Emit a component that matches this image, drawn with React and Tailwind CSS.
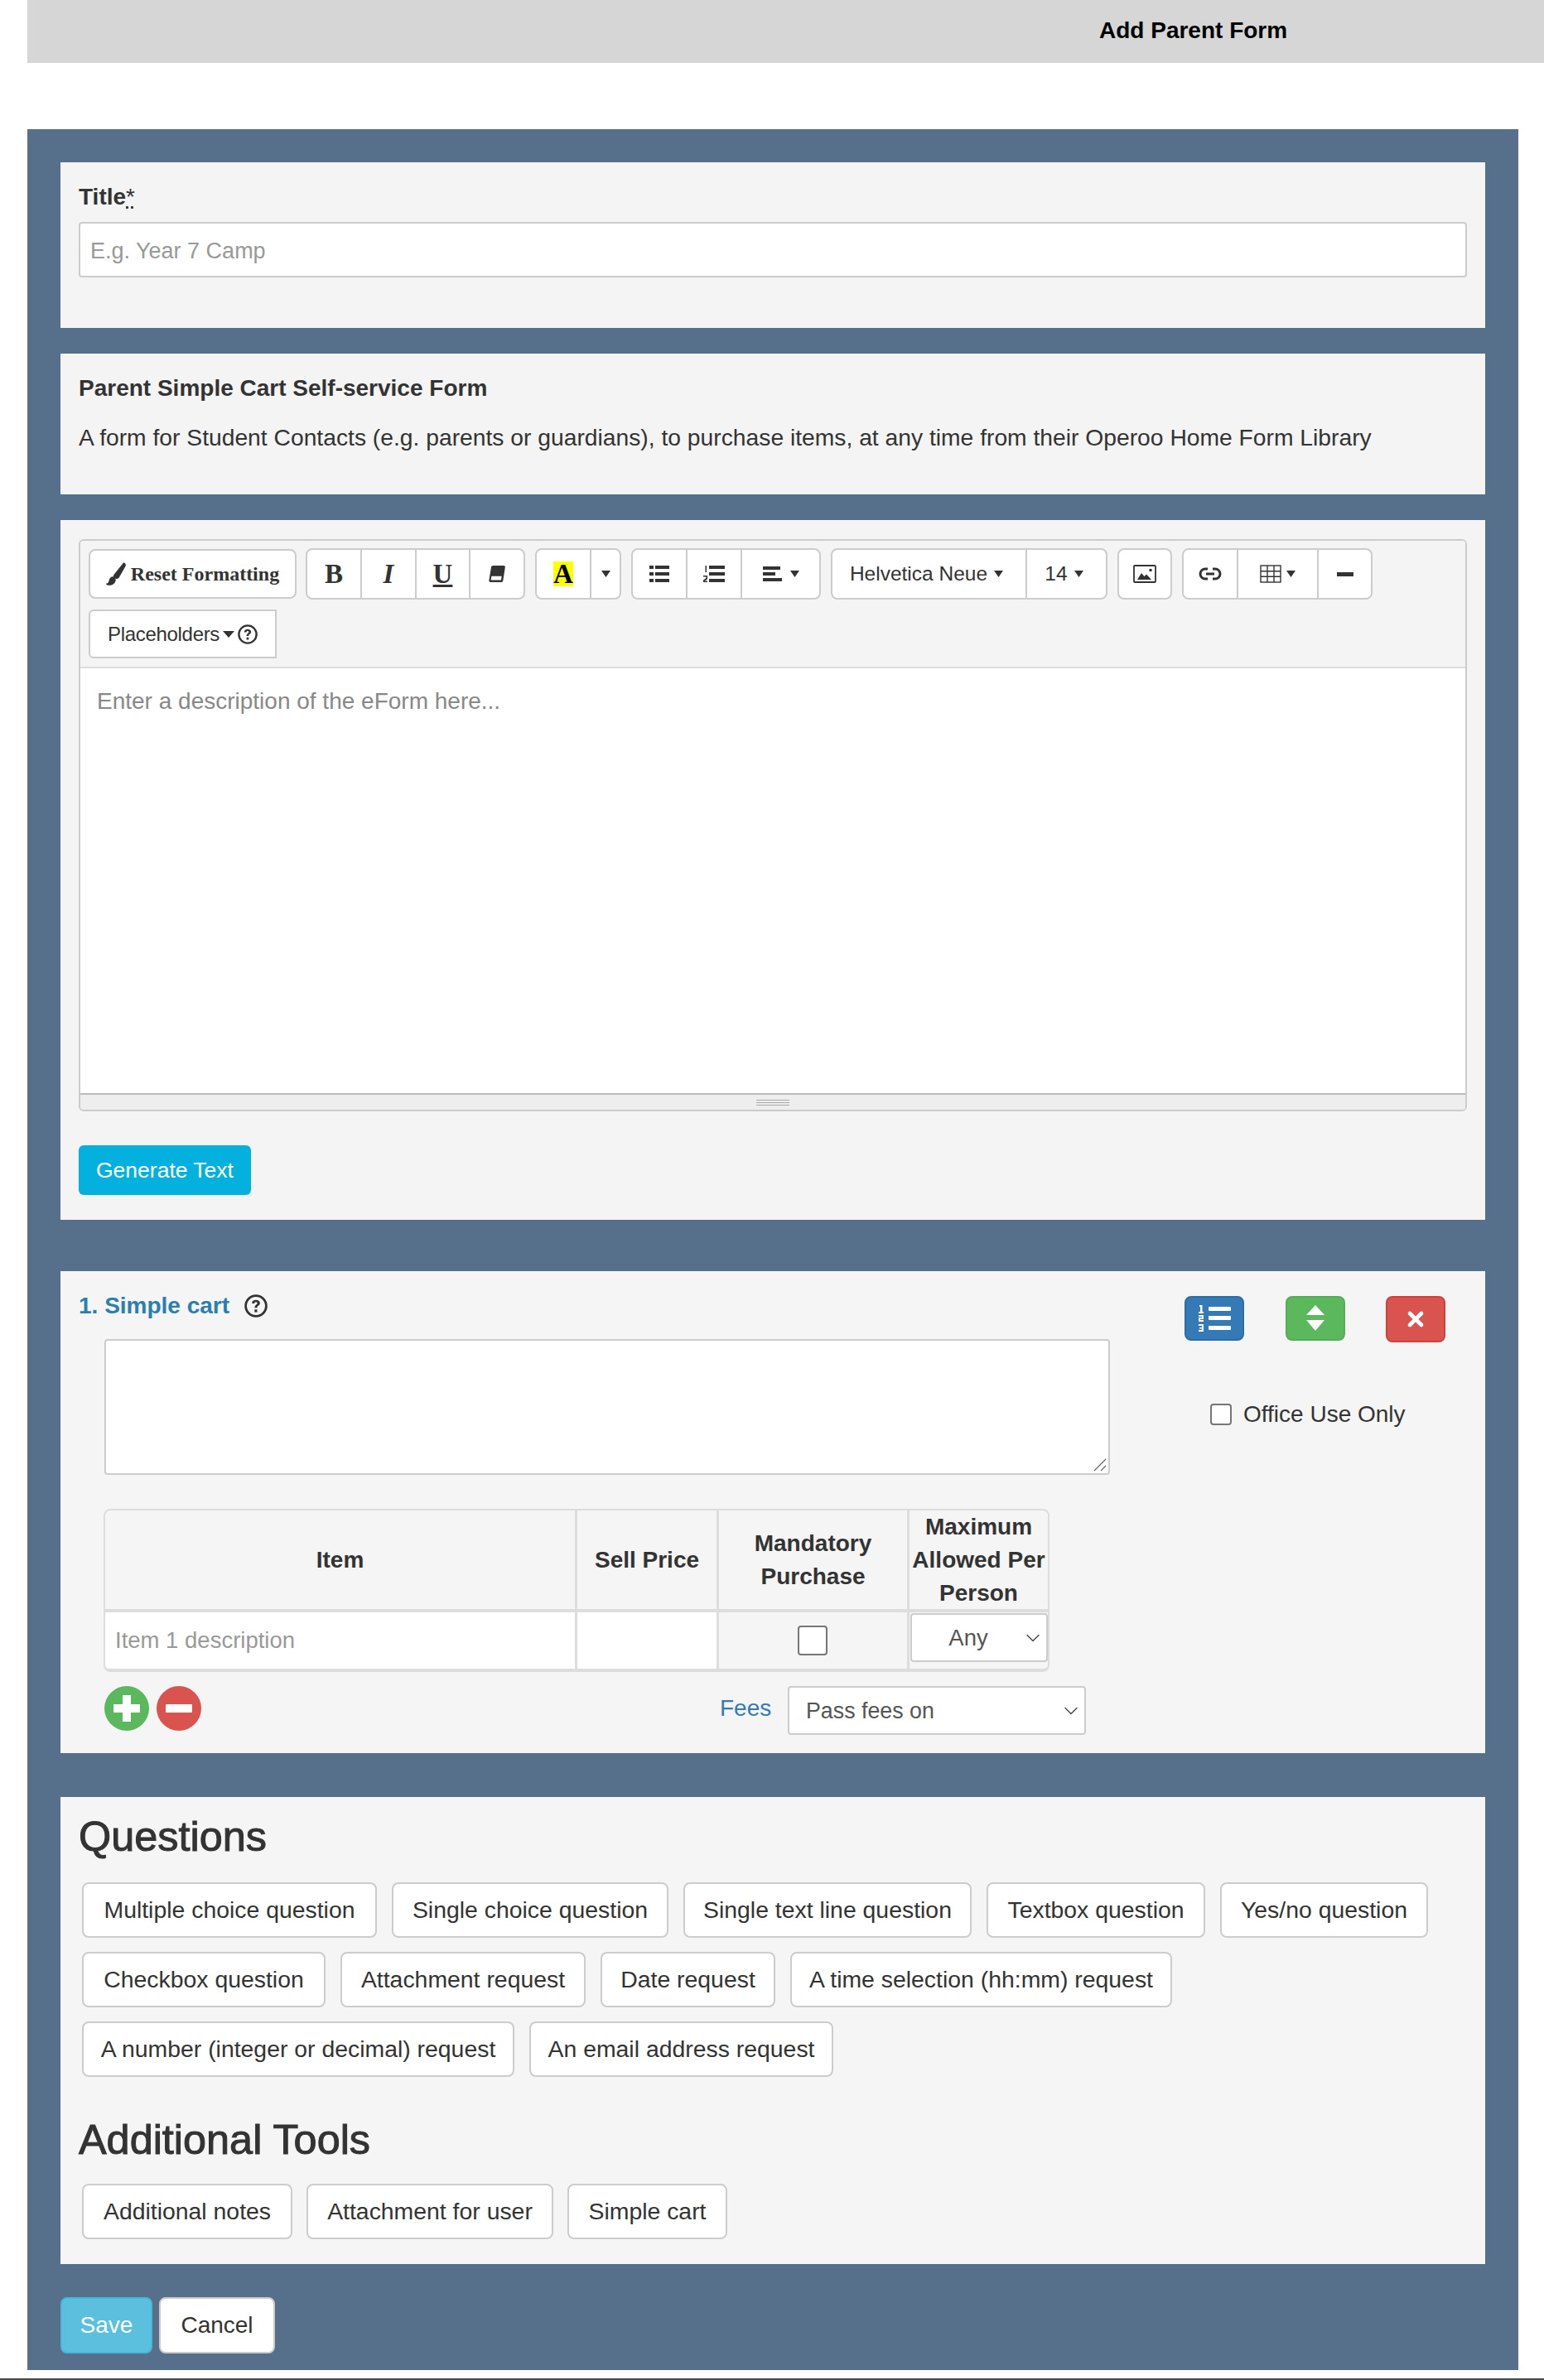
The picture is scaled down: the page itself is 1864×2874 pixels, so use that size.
import React from "react";
import { ChevronDown, X } from "lucide-react";

const Caret = ({ className = "w-[11px] h-[8px]" }) => (
  <svg viewBox="0 0 10 8" preserveAspectRatio="none" className={`fill-[#333] ${className}`}>
    <path d="M0 0h10L5 8z" />
  </svg>
);

const Help = ({ className = "" }) => (
  <svg viewBox="0 0 26 26" className={className}>
    <circle cx="13" cy="13" r="11.5" fill="none" stroke="#333" strokeWidth="2.6" />
    <path d="M8.500 10.200c0-2.600 2-3.900 4.500-3.900s4.500 1.400 4.500 3.500c0 3-3.200 2.800-3.200 5.400h-2.800c0-3.700 3-3.600 3-5.300 0-.8-.7-1.300-1.500-1.300-1 0-1.600.6-1.700 1.700z" fill="#333" />
    <rect x="11.400" y="17" width="3" height="3" fill="#333" />
  </svg>
);

const BrushIcon = () => (
  <svg viewBox="0 0 26 30" className="w-[24px] h-[28px] fill-[#333]">
    <path d="M23 0c2.500 1 3.500 3 2.500 5L17 20c-1 1.800-3.500 2-5.500.8-1.800-1.200-2.300-3-1.300-4.600z" />
    <path d="M8 18.500c2.500-.5 5 1.800 4.700 4.500-.3 4-4 7-9 7C1.500 30 0 29 0 27.500c2 .3 3.200-.8 3.700-3 .5-3 1.800-5.500 4.300-6z" />
  </svg>
);

const EraserIcon = () => (
  <svg viewBox="0 0 22 24" className="w-[20px] h-[22px]">
    <path d="M6 1h14c1.300 0 2 1 1.800 2.200L19 21c-.2 1.200-1 2-2.200 2H2.500C1 23 .2 22 .4 20.800L3.300 3C3.500 1.800 4.500 1 6 1z" fill="#333" />
    <path d="M3.700 15h13.600l-.9 5.300H2.900z" fill="white" />
  </svg>
);

const ListIcon = () => (
  <svg viewBox="0 0 24 20" className="w-[24px] h-[20px] fill-[#333]">
    <rect x="0" y="0" width="5" height="4" /><rect x="7" y="0" width="17" height="4" />
    <rect x="0" y="8" width="5" height="4" /><rect x="7" y="8" width="17" height="4" />
    <rect x="0" y="16" width="5" height="4" /><rect x="7" y="16" width="17" height="4" />
  </svg>
);

const OrderedIcon = () => (
  <svg viewBox="0 0 26 20" className="w-[26px] h-[20px] fill-[#333]">
    <rect x="7" y="0" width="19" height="4" /><rect x="7" y="8" width="19" height="4" /><rect x="7" y="16" width="19" height="4" />
    <rect x="2.500" y="0" width="1.500" height="8" />
    <path d="M0 12h5v4.500L1.500 18.500H5V20H0v-2.500L3.500 15v-1.500H0z" />
  </svg>
);

const AlignIcon = () => (
  <svg viewBox="0 0 23 18" className="w-[23px] h-[18px] fill-[#333]">
    <rect x="0" y="0" width="21" height="4" /><rect x="0" y="7" width="15" height="4" /><rect x="0" y="14" width="23" height="4" />
  </svg>
);

const ImageIcon = () => (
  <svg viewBox="0 0 28 22" className="w-[28px] h-[22px]">
    <rect x="1" y="1" width="26" height="20" rx="1" fill="none" stroke="#333" strokeWidth="1.800" />
    <path d="M5 18l5-8 3.500 4 2.500-2.500L22 18z" fill="#333" />
    <circle cx="21" cy="6.500" r="1.800" fill="#333" />
  </svg>
);

const LinkIcon = () => (
  <svg viewBox="0 0 28 16" className="w-[28px] h-[16px]" fill="none" stroke="#333" strokeWidth="3">
    <path d="M11 2H8a6 6 0 000 12h3M17 2h3a6 6 0 010 12h-3" />
    <path d="M9 8h10" />
  </svg>
);

const TableIcon = () => (
  <svg viewBox="0 0 26 22" className="w-[26px] h-[22px]" fill="none" stroke="#333" strokeWidth="1.400">
    <rect x="1" y="1" width="24" height="20" />
    <path d="M9 1v20M17 1v20M1 7.700h24M1 14.300h24" />
  </svg>
);

const SelectBox = ({ label, className = "", textClass = "" }) => (
  <div className={`flex items-center bg-white border-2 border-[#ccc] rounded-[4px] text-[#555] ${className}`}>
    <span className={`flex-1 ${textClass}`}>{label}</span>
    <ChevronDown className="w-[28px] h-[28px] text-[#444]" strokeWidth={1.2} />
  </div>
);

const ToolButton = ({ children, className = "" }) => (
  <div className={`flex items-center justify-center border-l-2 first:border-l-0 border-[#ccc] ${className}`}>{children}</div>
);

const ToolGroup = ({ children, className = "" }) => (
  <div className={`h-[62px] flex bg-white border-2 border-[#ccc] rounded-[8px] ${className}`}>{children}</div>
);

const QuestionButton = ({ label, width }) => (
  <button className={`h-[67px] pb-[1px] bg-white border-2 border-[#ccc] rounded-[8px] text-[28.4px] text-[#333] whitespace-nowrap ${width}`}>{label}</button>
);

const Panel = ({ className = "", children }) => (
  <section className={`px-[22px] ${className}`}>{children}</section>
);

const ROWS = [
  [
    ["Multiple choice question", "w-[356px]"],
    ["Single choice question", "w-[334px]"],
    ["Single text line question", "w-[348px]"],
    ["Textbox question", "w-[264px]"],
    ["Yes/no question", "w-[251px]"],
  ],
  [
    ["Checkbox question", "w-[294px]"],
    ["Attachment request", "w-[296px]"],
    ["Date request", "w-[211px]"],
    ["A time selection (hh:mm) request", "w-[461px]"],
  ],
  [
    ["A number (integer or decimal) request", "w-[522px]"],
    ["An email address request", "w-[367px]"],
  ],
];

const TOOLS = [
  ["Additional notes", "w-[254px]"],
  ["Attachment for user", "w-[298px]"],
  ["Simple cart", "w-[193px]"],
];

const HEAD_CELL = "flex items-center justify-center text-center border-b-[4px] border-[#ddd]";
const HEADING = "text-[50.4px] leading-[52px] [-webkit-text-stroke:1px_#333]";

export default function App() {
  return (
    <div className="bg-white h-[2874px] font-['Liberation_Sans',Arial,sans-serif] text-[28px] leading-[40px] text-[#333] border-b-2 border-[#4a4a4a] overflow-hidden">
      <header className="ml-[33px] h-[76px] bg-[#d6d6d6] pl-[1294px] pb-[3px] flex items-center font-bold text-black">Add Parent Form</header>

      <main className="mt-[80px] ml-[33px] w-[1800px] h-[2706px] bg-[#56708b] px-[40px] pt-[40px]">
        <Panel className="h-[200px] pt-[22px] bg-[#f4f4f4]">
          <div className="font-bold h-[50px]"><span>Title</span><span className="font-normal underline decoration-dotted">*</span></div>
          <div className="h-[67px] px-[12px] pt-[2px] flex items-center bg-white border-2 border-[#ccc] rounded-[4px] text-[27px] text-[#999]">E.g. Year 7 Camp</div>
        </Panel>

        <Panel className="mt-[31px] h-[170px] pt-[22px] bg-[#f4f4f4]">
          <h2 className="font-bold">Parent Simple Cart Self-service Form</h2>
          <p className="mt-[19px] text-[28.25px]">A form for Student Contacts (e.g. parents or guardians), to purchase items, at any time from their Operoo Home Form Library</p>
        </Panel>

        <Panel className="mt-[31px] h-[845px] pt-[23px] bg-[#f4f4f4]">
          <div className="h-[691px] border-2 border-[#ccc] rounded-[6px] flex flex-col overflow-hidden">
            <div className="h-[154px] shrink-0 bg-[#f4f4f4] border-b-2 border-[#ddd] pl-[10px] pt-[9px]">
              <div className="flex gap-[12px] items-center">
                <div className="w-[251px] mr-[-1px] h-[60px] flex items-center justify-center gap-[6px] bg-white border-2 border-[#ccc] rounded-[8px] font-['Liberation_Serif',serif] font-bold text-[24px]">
                  <BrushIcon />
                  Reset Formatting
                </div>
                <ToolGroup className="w-[265px] font-['Liberation_Serif',serif] font-bold text-[33px]">
                  <ToolButton className="w-[64px]">B</ToolButton>
                  <ToolButton className="flex-1 italic">I</ToolButton>
                  <ToolButton className="flex-1 underline">U</ToolButton>
                  <ToolButton className="flex-1"><EraserIcon /></ToolButton>
                </ToolGroup>
                <ToolGroup className="w-[104px] font-['Liberation_Serif',serif] font-bold">
                  <ToolButton className="w-[64px]"><span className="w-[24px] h-[30px] flex items-center justify-center bg-[#ffff00] text-black text-[33px]">A</span></ToolButton>
                  <ToolButton className="flex-1"><Caret /></ToolButton>
                </ToolGroup>
                <ToolGroup className="w-[229px]">
                  <ToolButton className="w-[64px]"><ListIcon /></ToolButton>
                  <ToolButton className="w-[66px]"><OrderedIcon /></ToolButton>
                  <ToolButton className="flex-1 gap-[10px]"><AlignIcon /><Caret /></ToolButton>
                </ToolGroup>
                <ToolGroup className="w-[334px] text-[24.5px]">
                  <ToolButton className="w-[233px] gap-[8px] pr-[6px]">Helvetica Neue <Caret /></ToolButton>
                  <ToolButton className="flex-1 gap-[8px] pr-[6px]">14 <Caret /></ToolButton>
                </ToolGroup>
                <ToolGroup className="w-[66px]">
                  <ToolButton className="flex-1"><ImageIcon /></ToolButton>
                </ToolGroup>
                <ToolGroup className="w-[230px]">
                  <ToolButton className="w-[64px]"><LinkIcon /></ToolButton>
                  <ToolButton className="w-[97px] gap-[6px]"><TableIcon /><Caret /></ToolButton>
                  <ToolButton className="flex-1"><div className="w-[20px] h-[5px] bg-[#333]" /></ToolButton>
                </ToolGroup>
              </div>
              <div className="mt-[12px] w-[227px] h-[59px] flex items-center justify-center gap-[4px] bg-white border-2 border-[#ccc] rounded-l-[6px] text-[24px] tracking-[-0.3px]">
                Placeholders <Caret className="w-[14px] h-[8px]" /><Help className="w-[24px] h-[24px]" />
              </div>
            </div>
            <div className="flex-1 bg-white px-[20px] pt-[20px] text-[#888]">Enter a description of the eForm here...</div>
            <div className="h-[20px] shrink-0 bg-[#eee] border-t-2 border-[#bbb] flex flex-col items-center justify-center gap-[2px]">
              <div className="w-[40px] h-[1px] bg-[#aaa]" />
              <div className="w-[40px] h-[1px] bg-[#aaa]" />
              <div className="w-[40px] h-[1px] bg-[#aaa]" />
            </div>
          </div>
          <button className="mt-[41px] w-[208px] h-[60px] bg-[#04b1de] rounded-[6px] text-[26.5px] text-white">Generate Text</button>
        </Panel>

        <Panel className="relative mt-[62px] h-[582px] pt-[22px] bg-[#f5f5f5]">
          <div className="flex items-center gap-[18px] font-bold text-[#2a7fb0] h-[40px]">
            1. Simple cart <Help className="w-[28px] h-[28px]" />
          </div>
          <div className="absolute left-[1357px] top-[30px] w-[72px] h-[54px] bg-[#337ab7] border-2 border-[#2e6da4] rounded-[8px] flex items-center justify-center">
            <svg viewBox="0 0 40 34" className="w-[40px] h-[34px] fill-white">
              <rect x="13" y="3" width="27" height="5" rx="1" /><rect x="13" y="14" width="27" height="5" rx="1" /><rect x="13" y="26" width="27" height="5" rx="1" />
              <path d="M2 1h3.500v8H7v2H1V9h2V3H2zM1 13h6v5H3v1h4v2H1v-5h4v-1H1zM1 24h6v9H1v-2h4v-1.500H2v-1.500h3V26H1z" />
            </svg>
          </div>
          <div className="absolute left-[1479px] top-[30px] w-[72px] h-[54px] bg-[#5cb85c] border-2 border-[#55ad55] rounded-[8px] flex items-center justify-center">
            <svg viewBox="0 0 22 32" className="w-[22px] h-[32px] fill-white">
              <path d="M11 0l11 12H0zM0 18h22L11 31z" />
            </svg>
          </div>
          <div className="absolute left-[1600px] top-[30px] w-[72px] h-[56px] bg-[#d9534f] border-2 border-[#d43f3a] rounded-[8px] flex items-center justify-center">
            <X className="w-[28px] h-[28px] text-white" strokeWidth={4} />
          </div>
          <div className="absolute left-[1388px] top-[153px] flex items-center gap-[14px]">
            <div className="w-[26px] h-[26px] bg-white border-2 border-[#767676] rounded-[4px]" />
            Office Use Only
          </div>

          <div className="ml-[31px] mt-[20px] w-[1214px] h-[164px] bg-white border-2 border-[#ccc] rounded-[4px] relative overflow-hidden">
            <svg viewBox="0 0 16 16" className="absolute right-[2px] bottom-[2px] w-[16px] h-[16px]" fill="none" stroke="#666" strokeWidth="1.2">
              <path d="M1 15L15 1M9 15l6-6" />
            </svg>
          </div>

          <div className="ml-[30px] mt-[41px] w-[1142px] h-[197px] border-t-2 border-x-2 border-b-4 border-[#ddd] rounded-[8px] overflow-hidden grid grid-cols-[570px_171px_230px_1fr] grid-rows-[123px_68px] font-bold">
            <div className={`${HEAD_CELL} border-r-[3px]`}>Item</div>
            <div className={`${HEAD_CELL} border-r-[3px]`}>Sell Price</div>
            <div className={`${HEAD_CELL} border-r-[3px]`}>Mandatory<br />Purchase</div>
            <div className={HEAD_CELL}>Maximum<br />Allowed Per<br />Person</div>
            <div className="bg-white border-r-[3px] border-[#ddd] pl-[12px] flex items-center font-normal text-[27.5px] text-[#999]">Item 1 description</div>
            <div className="bg-white border-r-[3px] border-[#ddd]" />
            <div className="border-r-[3px] border-[#ddd] flex items-center justify-center pr-[2px]">
              <div className="w-[36px] h-[36px] bg-white border-2 border-[#767676] rounded-[4px]" />
            </div>
            <div className="font-normal text-[27.5px]">
              <SelectBox label="Any" className="h-[59px] w-[166px] pl-[4px] pr-[2px] ml-[1px] mt-[1px]" textClass="text-center" />
            </div>
          </div>

          <div className="relative mt-[17px] h-[60px]">
            <svg viewBox="0 0 54 54" className="absolute left-[31px] top-0 w-[54px] h-[54px]">
              <circle cx="27" cy="27" r="27" fill="#5cb85c" />
              <path d="M22 11h10v11h11v10H32v11H22V32H11V22h11z" fill="white" />
            </svg>
            <svg viewBox="0 0 54 54" className="absolute left-[94px] top-0 w-[54px] h-[54px]">
              <circle cx="27" cy="27" r="27" fill="#d9534f" />
              <rect x="11" y="22" width="32" height="10" rx="1" fill="white" />
            </svg>
            <span className="absolute left-[774px] top-[7px] text-[#337ab7]">Fees</span>
            <SelectBox label="Pass fees on" className="absolute left-[856px] top-0 h-[59px] w-[360px] pl-[20px] pr-[2px] text-[26.8px]" />
          </div>
        </Panel>

        <Panel className="mt-[53px] h-[564px] pt-[22px] bg-[#f5f5f5]">
          <h3 className={HEADING}>Questions</h3>
          <div className="ml-[4px] mt-[29px] flex flex-col gap-[17px]">
            {ROWS.map((row, i) => (
              <div key={i} className="flex gap-[18px]">
                {row.map(([label, width]) => <QuestionButton key={label} label={label} width={width} />)}
              </div>
            ))}
          </div>
          <h3 className={`mt-[50px] ${HEADING}`}>Additional Tools</h3>
          <div className="ml-[4px] mt-[27px] flex gap-[17px]">
            {TOOLS.map(([label, width]) => <QuestionButton key={label} label={label} width={width} />)}
          </div>
        </Panel>

        <div className="mt-[40px] flex gap-[8px]">
          <button className="w-[111px] h-[68px] bg-[#5bc0de] border-2 border-[#46b8da] rounded-[8px] text-white">Save</button>
          <button className="w-[140px] h-[68px] bg-white border-2 border-[#ccc] rounded-[8px] text-[#333]">Cancel</button>
        </div>
      </main>
    </div>
  );
}
